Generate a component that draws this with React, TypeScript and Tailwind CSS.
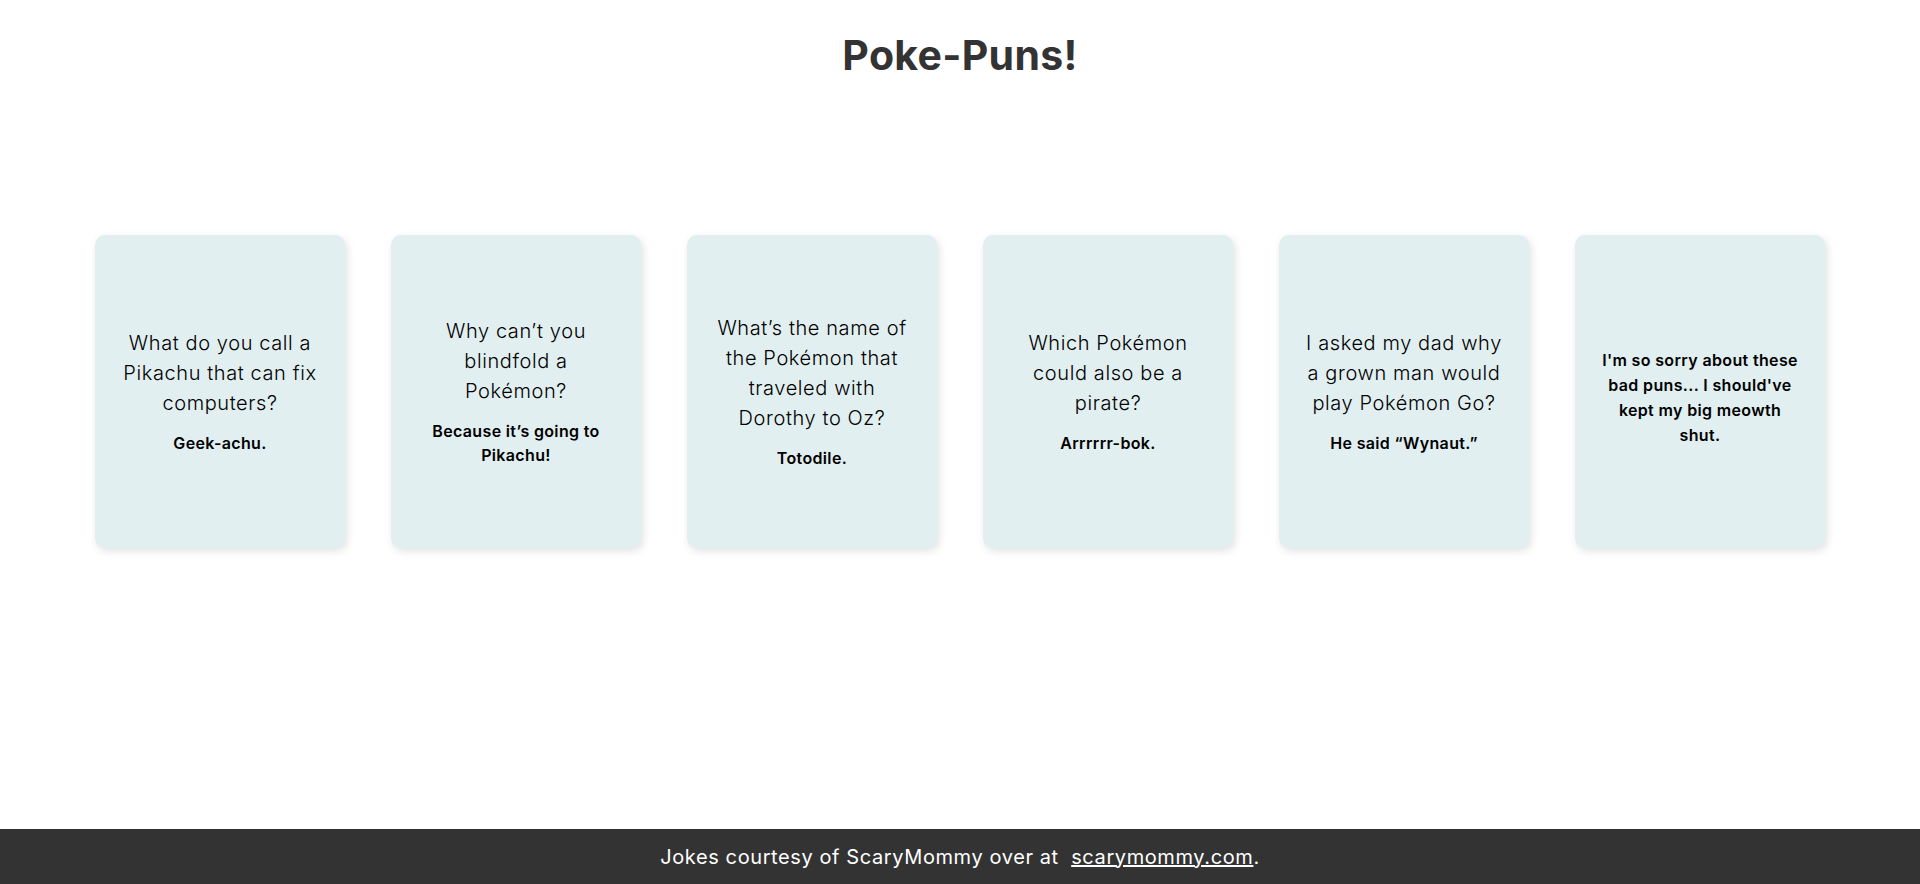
import React from "react";

const cards: { q?: string; a: string }[] = [
  { q: "What do you call a Pikachu that can fix computers?", a: "Geek-achu." },
  { q: "Why can’t you blindfold a Pokémon?", a: "Because it’s going to Pikachu!" },
  { q: "What’s the name of the Pokémon that traveled with Dorothy to Oz?", a: "Totodile." },
  { q: "Which Pokémon could also be a pirate?", a: "Arrrrrr-bok." },
  { q: "I asked my dad why a grown man would play Pokémon Go?", a: "He said “Wynaut.”" },
  { a: "I'm so sorry about these bad puns... I should've kept my big meowth shut." },
];

export default function App() {
  return (
    <div
      className="h-[884px] flex flex-col bg-white"
      style={{ fontFamily: "Inter, 'Noto Sans', sans-serif" }}
    >
      <h1 className="text-[41px] font-bold text-[#333333] text-center leading-[60px] pt-[25px] tracking-[0.3px]">
        Poke-Puns!
      </h1>
      <div className="flex justify-center gap-[46px] mt-[150px]">
        {cards.map((c, i) => (
          <div
            key={i}
            className="w-[250px] h-[313px] rounded-[10px] bg-[#e2eff0] shadow-[2px_3px_8px_rgba(0,0,0,0.12)] flex flex-col items-center justify-center px-[22px] text-center text-black"
          >
            {c.q && (
              <p className="text-[20px] font-light leading-[30px] tracking-[0.6px]">{c.q}</p>
            )}
            <p
              className={
                c.q
                  ? "mt-[13px] text-[16px] font-semibold leading-[24px] tracking-[0.35px]"
                  : "pt-[12px] text-[16px] font-semibold leading-[25px] tracking-[0.35px]"
              }
            >
              {c.a}
            </p>
          </div>
        ))}
      </div>
      <footer className="mt-auto h-[55px] bg-[#333333] flex items-center justify-center text-white text-[20px] tracking-[0.6px]">
        <span className="whitespace-pre">Jokes courtesy of ScaryMommy over at  </span>
        <a className="underline" href="#">scarymommy.com</a>
        <span>.</span>
      </footer>
    </div>
  );
}
